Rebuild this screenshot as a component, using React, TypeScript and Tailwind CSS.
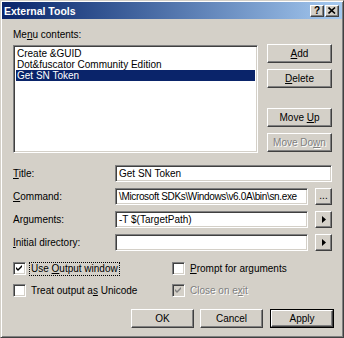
import React from "react";

const raised =
  "border border-t-white border-l-white border-r-[#404040] border-b-[#404040] shadow-[inset_-1px_-1px_0_#808080]";
const sunken =
  "border border-t-[#808080] border-l-[#808080] border-r-white border-b-white shadow-[inset_1px_1px_0_#404040,inset_-1px_-1px_0_#d4d0c8]";

function U({ children }: { children: React.ReactNode }) {
  return <span className="underline underline-offset-[1px]">{children}</span>;
}

function Btn({
  children,
  className = "",
  disabled = false,
}: {
  children: React.ReactNode;
  className?: string;
  disabled?: boolean;
}) {
  return (
    <div
      className={`${raised} bg-[#d4d0c8] flex items-center justify-center ${
        disabled ? "text-[#808080] [text-shadow:1px_1px_0_#fff]" : "text-black"
      } ${className}`}
    >
      <span className="whitespace-pre">{children}</span>
    </div>
  );
}

function Check({ checked, disabled }: { checked?: boolean; disabled?: boolean }) {
  return (
    <div
      className={`${sunken} w-[13px] h-[13px] shrink-0 flex items-center justify-center ${
        disabled ? "bg-[#d4d0c8]" : "bg-white"
      }`}
    >
      {checked && (
        <svg width="7" height="7" viewBox="0 0 7 7">
          <path
            d="M0 2 L2 4 L6 0 L6 2 L2 6 L0 4 Z"
            fill={disabled ? "#808080" : "#000"}
          />
        </svg>
      )}
    </div>
  );
}

function Arrow() {
  return (
    <svg width="4" height="7" viewBox="0 0 4 7">
      <path d="M0 0 L4 3.5 L0 7 Z" fill="#000" />
    </svg>
  );
}

export default function App() {
  return (
    <div className="w-[344px] h-[338px] bg-[#d4d0c8] border border-t-[#d4d0c8] border-l-[#d4d0c8] border-r-[#404040] border-b-[#404040] shadow-[inset_1px_1px_0_#fff,inset_-1px_-1px_0_#808080] p-[1px] flex flex-col font-['Liberation_Sans',Arial,sans-serif] text-[10px] leading-[12px] text-black overflow-hidden">
      {/* Title bar */}
      <div className="h-[17px] shrink-0 bg-linear-to-r from-[#0a246a] to-[#a6caf0] flex items-center justify-between pl-[2px] pr-[3px]">
        <span className="text-white font-bold text-[10.5px]">External Tools</span>
        <div className="flex gap-[1px]">
          <div className={`${raised} w-[14px] h-[12px] bg-[#d4d0c8] flex items-center justify-center font-bold text-[10px] leading-[10px]`}>
            ?
          </div>
          <div className={`${raised} w-[14px] h-[12px] bg-[#d4d0c8] flex items-center justify-center`}>
            <svg width="8" height="7" viewBox="0 0 8 7">
              <path d="M0.5 0.5 L7 6.5 M7 0.5 L0.5 6.5" stroke="#000" strokeWidth="1.6" />
            </svg>
          </div>
        </div>
      </div>

      {/* Body */}
      <div className="flex flex-col pl-[11px] pr-[10px]">
        <div className="mt-[10px] h-[12px]">
          Me<U>n</U>u contents:
        </div>
        <div className="flex mt-[4px]">
          <div className={`${sunken} bg-white w-[245px] h-[108px] p-[2px]`}>
            <div className="h-[11px] leading-[11px] pl-[1px]">Create &amp;GUID</div>
            <div className="h-[11px] leading-[11px] pl-[1px]">Dot&amp;fuscator Community Edition</div>
            <div className="h-[11px] leading-[11px] pl-[1px] bg-[#0a246a] text-white">Get SN Token</div>
          </div>
          <div className="ml-[9px] w-[65px] flex flex-col">
            <Btn className="h-[19px] -mt-[1px]">
              <U>A</U>dd
            </Btn>
            <Btn className="h-[19px] mt-[6px]">
              <U>D</U>elete
            </Btn>
            <Btn className="h-[19px] mt-[20px]">
              Move <U>U</U>p
            </Btn>
            <Btn className="h-[19px] mt-[6px]" disabled>
              Move Do<U>w</U>n
            </Btn>
          </div>
        </div>

        {/* Form */}
        <div className="flex flex-col gap-[6px] mt-[12px]">
          <div className="flex items-center h-[17px]">
            <div className="w-[102px] shrink-0">
              <U>T</U>itle:
            </div>
            <div className={`${sunken} bg-white flex-1 h-[17px] flex items-center pl-[3px]`}>Get SN Token</div>
          </div>
          <div className="flex items-center h-[17px]">
            <div className="w-[102px] shrink-0">
              <U>C</U>ommand:
            </div>
            <div className={`${sunken} bg-white flex-1 min-w-0 h-[17px] flex items-center pl-[3px] overflow-hidden whitespace-nowrap`}>
              <span className="tracking-[-0.35px]">\Microsoft SDKs\Windows\v6.0A\bin\sn.exe</span>
            </div>
            <Btn className="w-[17px] h-[17px] ml-[7px] shrink-0 leading-[8px] items-end pb-[4px]">...</Btn>
          </div>
          <div className="flex items-center h-[17px]">
            <div className="w-[102px] shrink-0">
              Ar<U>g</U>uments:
            </div>
            <div className={`${sunken} bg-white flex-1 h-[17px] flex items-center pl-[3px]`}>-T $(TargetPath)</div>
            <Btn className="w-[17px] h-[17px] ml-[7px] shrink-0">
              <Arrow />
            </Btn>
          </div>
          <div className="flex items-center h-[17px]">
            <div className="w-[102px] shrink-0">
              <U>I</U>nitial directory:
            </div>
            <div className={`${sunken} bg-white flex-1 h-[17px]`}></div>
            <Btn className="w-[17px] h-[17px] ml-[7px] shrink-0">
              <Arrow />
            </Btn>
          </div>
        </div>

        {/* Checkboxes */}
        <div className="grid grid-cols-[159px_1fr] gap-y-[9px] mt-[11px]">
          <div className="flex items-center gap-[4px] h-[13px]">
            <Check checked />
            <span className="outline-1 outline-dotted outline-black px-[1px]">
              Use <U>O</U>utput window
            </span>
          </div>
          <div className="flex items-center gap-[5px] h-[13px]">
            <Check />
            <span>
              <U>P</U>rompt for arguments
            </span>
          </div>
          <div className="flex items-center gap-[5px] h-[13px]">
            <Check />
            <span>
              Treat output a<U>s</U> Unicode
            </span>
          </div>
          <div className="flex items-center gap-[5px] h-[13px]">
            <Check checked disabled />
            <span className="text-[#808080] [text-shadow:1px_1px_0_#fff]">
              Close on e<U>x</U>it
            </span>
          </div>
        </div>

        {/* Bottom buttons */}
        <div className="flex justify-end gap-[6px] mt-[12px] -mr-[2px]">
          <Btn className="w-[63px] h-[19px]">OK</Btn>
          <Btn className="w-[63px] h-[19px]">Cancel</Btn>
          <div className="w-[64px] h-[19px] border border-black ml-[1px]">
            <Btn className="w-full h-full">Apply</Btn>
          </div>
        </div>
      </div>
    </div>
  );
}
